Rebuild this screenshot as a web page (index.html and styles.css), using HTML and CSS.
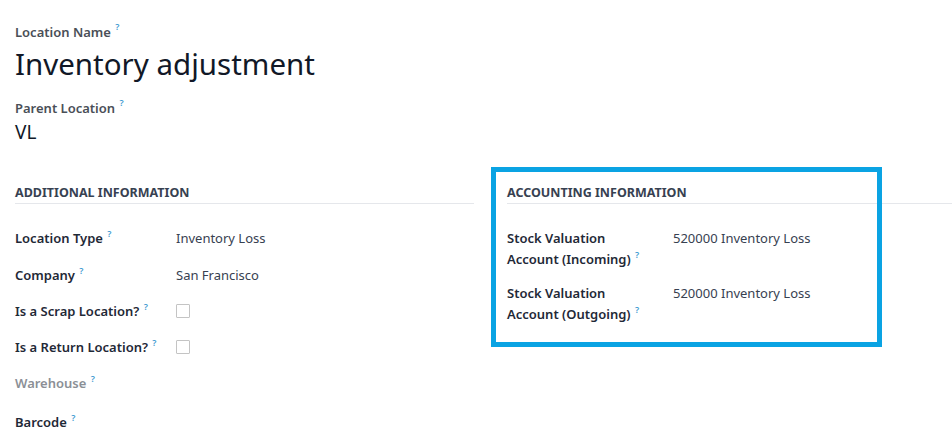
FILE: index.html
```html
<!DOCTYPE html>
<html lang="en">
<head>
  <meta charset="UTF-8">
  <meta name="viewport" content="width=device-width, initial-scale=1.0">
  <title>Inventory adjustment</title>
  <link rel="stylesheet" href="styles.css">
</head>
<body>
  <div class="sheet">
    <div class="title-group">
      <div class="label">Location Name <sup class="tip">?</sup></div>
      <h1 class="name">Inventory adjustment</h1>
      <div class="label">Parent Location <sup class="tip">?</sup></div>
      <div class="parent">VL</div>
    </div>

    <div class="groups">
      <div class="group">
        <h2 class="group-title">Additional Information</h2>
        <div class="fields">
          <div class="row">
            <div class="field-label">Location Type <sup class="tip">?</sup></div>
            <div class="value">Inventory Loss</div>
          </div>
          <div class="row">
            <div class="field-label">Company <sup class="tip">?</sup></div>
            <div class="value">San Francisco</div>
          </div>
          <div class="row">
            <div class="field-label">Is a Scrap Location? <sup class="tip">?</sup></div>
            <div class="value"><span class="check"></span></div>
          </div>
          <div class="row">
            <div class="field-label">Is a Return Location? <sup class="tip">?</sup></div>
            <div class="value"><span class="check"></span></div>
          </div>
          <div class="row">
            <div class="field-label muted">Warehouse <sup class="tip">?</sup></div>
            <div class="value"></div>
          </div>
          <div class="row row-last">
            <div class="field-label">Barcode <sup class="tip">?</sup></div>
            <div class="value"></div>
          </div>
        </div>
      </div>

      <div class="group group-acc">
        <div class="highlight"></div>
        <h2 class="group-title">Accounting Information</h2>
        <div class="fields">
          <div class="row row-wide">
            <div class="field-label">Stock Valuation Account&nbsp;(Incoming)&nbsp;<sup class="tip">?</sup></div>
            <div class="value">520000 Inventory Loss</div>
          </div>
          <div class="row row-wide">
            <div class="field-label">Stock Valuation Account&nbsp;(Outgoing)&nbsp;<sup class="tip">?</sup></div>
            <div class="value">520000 Inventory Loss</div>
          </div>
        </div>
      </div>
    </div>
  </div>
</body>
</html>
```

FILE: styles.css
```css
* { margin: 0; padding: 0; box-sizing: border-box; }
html, body { width: 100%; height: 100%; background: #fff; overflow: hidden; }
body { font-family: "Noto Sans", "Open Sans", sans-serif; font-size: 13px; color: #212529; }

.sheet { padding: 22px 0 0 15px; }

.label { font-weight: 600; color: #4a4f57; line-height: 20px; }
.tip { color: #3d9ad1; font-size: 9px; font-weight: 600; vertical-align: top; position: relative; top: -5px; margin-left: 1px; }
.name { font-size: 29.5px; font-weight: 400; line-height: 42px; color: #111827; margin: 1px 0 13px; }
.parent { font-size: 19px; line-height: 28px; color: #111827; }

.groups { display: grid; grid-template-columns: 459px 1fr; column-gap: 33px; margin-top: 37px; }
.group { position: relative; }
.group-title { font-size: 12.5px; font-weight: 700; text-transform: uppercase; color: #374151; line-height: 20px; padding-bottom: 0; border-bottom: 1px solid #e5e7eb; margin-bottom: 24px; }

.row { display: grid; grid-template-columns: 161px 1fr; line-height: 21px; margin-bottom: 15px; }
.row + .row { padding-top: 1px; margin-bottom: 14px; }
.row-last { padding-top: 4px !important; }
.row-wide { grid-template-columns: 166px 1fr; margin-bottom: 12px !important; }
.field-label { font-weight: 600; color: #1f2937; }
.field-label.muted { color: #8b8f96; }
.value { color: #374151; }
.check { display: inline-block; width: 14px; height: 14px; border: 1.5px solid #c4c4c4; border-radius: 1px; vertical-align: middle; margin-top: -3px; }
.row-wide .field-label { padding-right: 10px; }

.highlight { position: absolute; left: -16px; top: -16px; width: 391px; height: 180px; border: 5px solid #0aa3e3; pointer-events: none; }
```
